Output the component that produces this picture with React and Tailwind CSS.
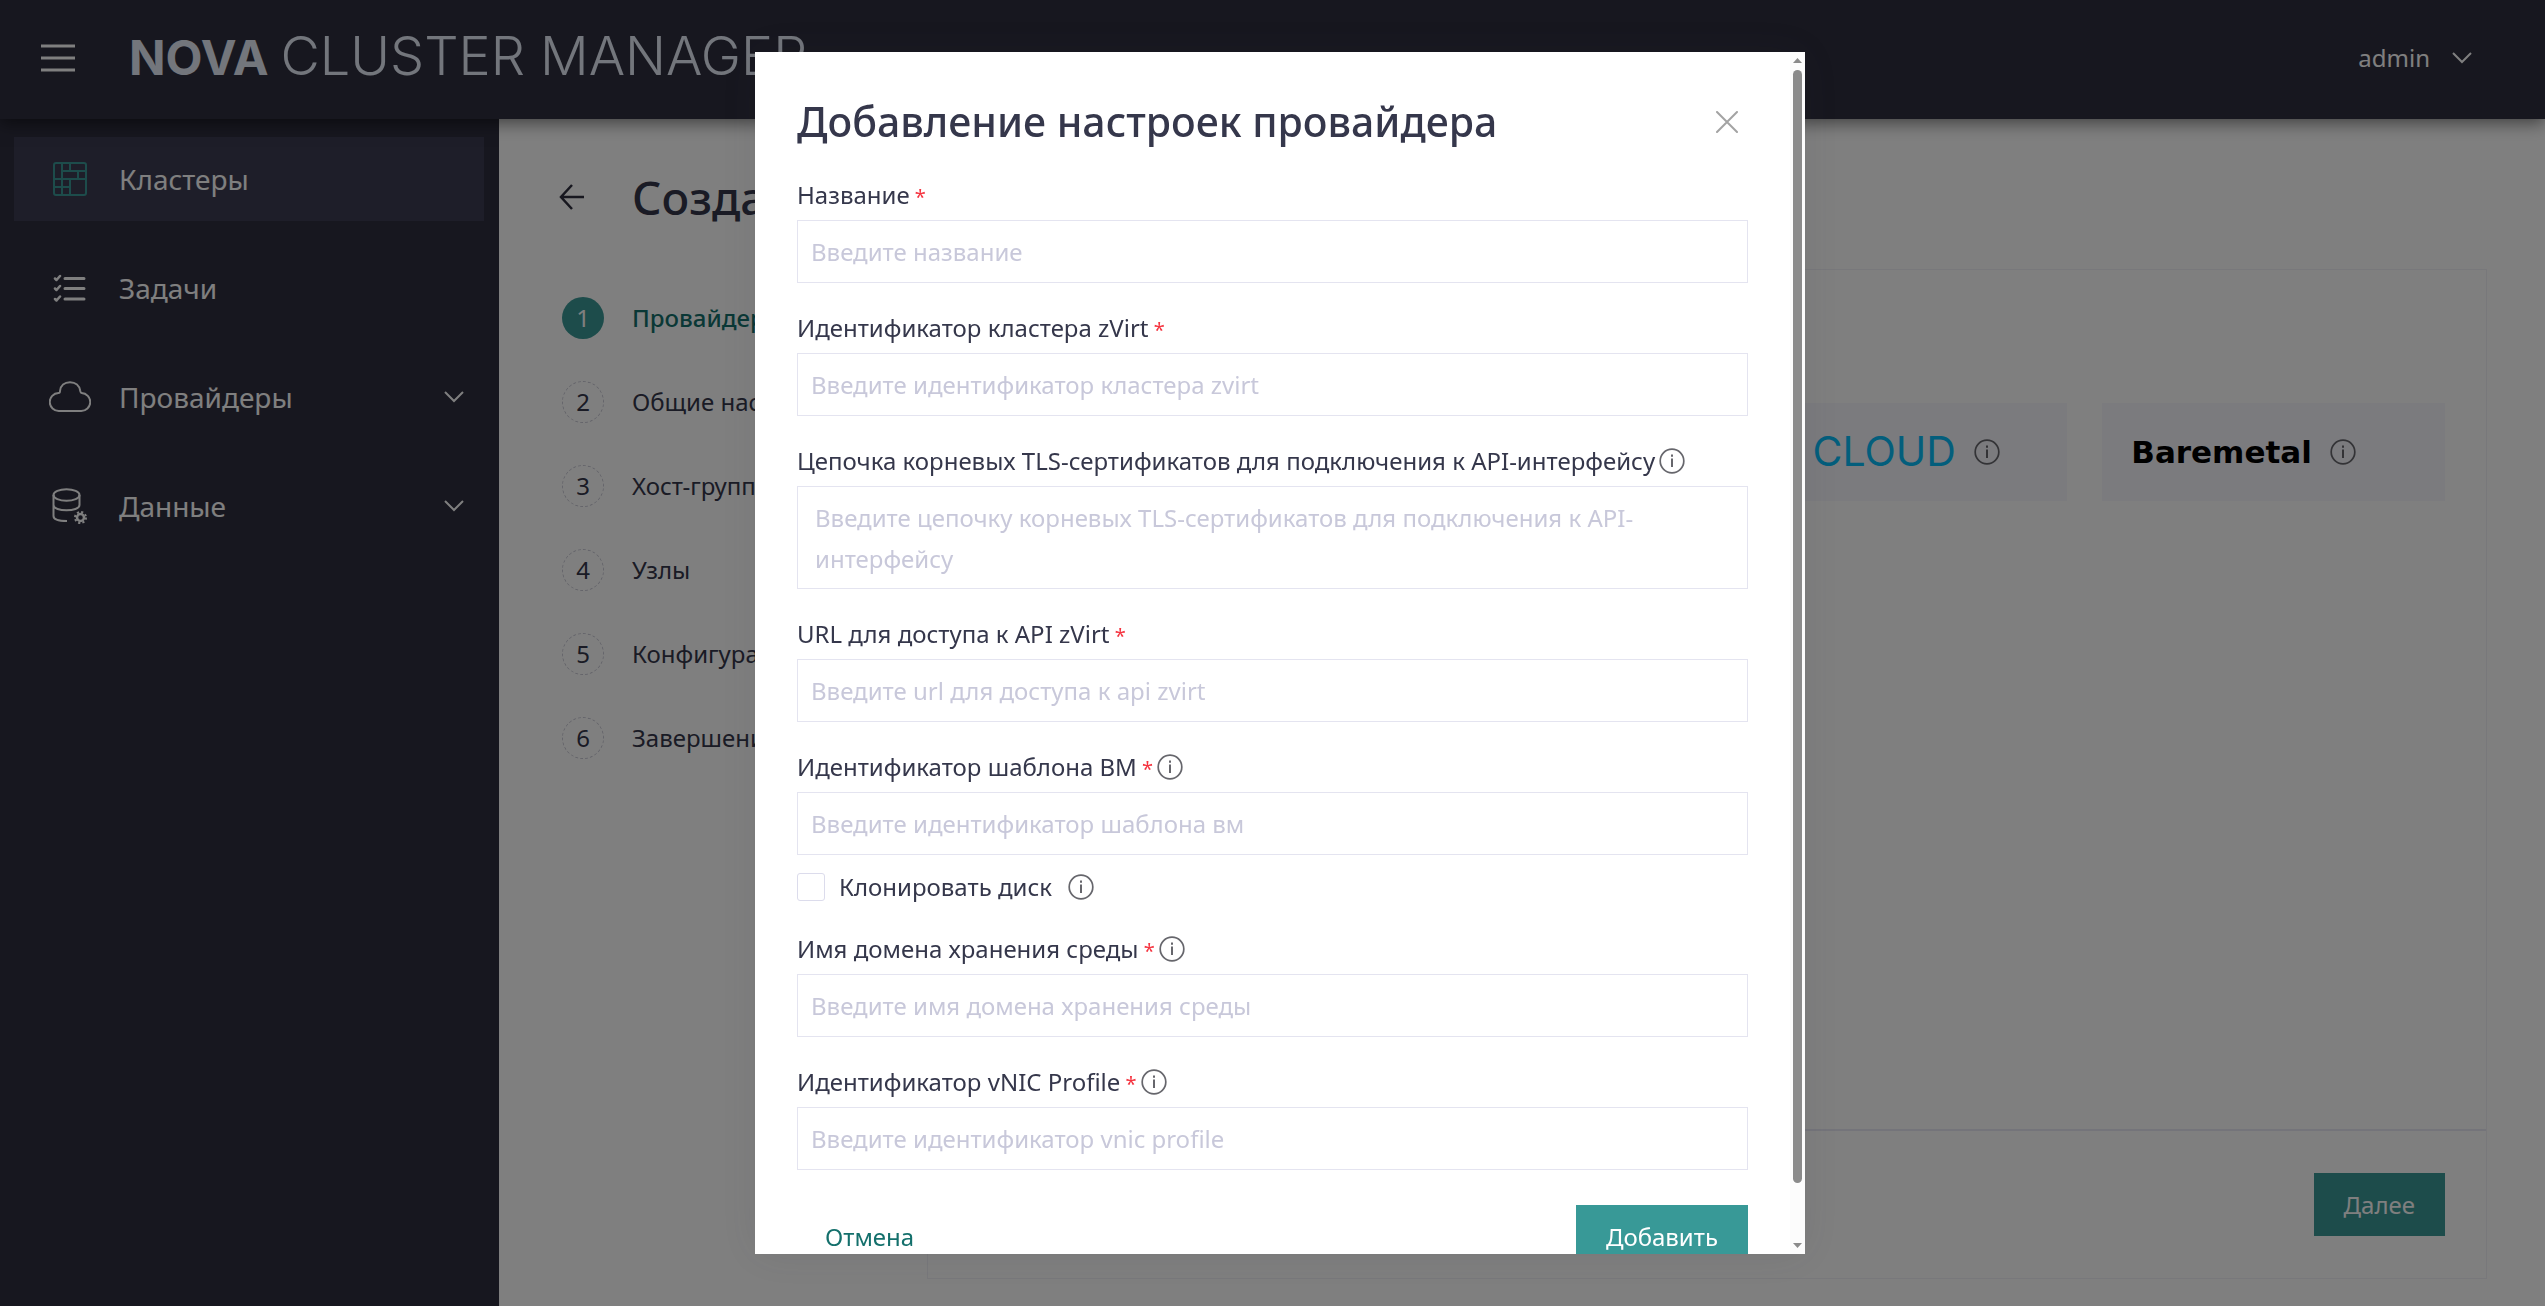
import React, { useState } from "react";

const menu = [
  { id: "clusters", title: "Кластеры", Icon: ClustersIcon, active: true },
  { id: "tasks", title: "Задачи", Icon: TasksIcon },
  { id: "providers", title: "Провайдеры", Icon: CloudIcon, nested: true },
  { id: "data", title: "Данные", Icon: DataIcon, nested: true },
];

const steps = [
  "Провайдер",
  "Общие настройки",
  "Хост-группы",
  "Узлы",
  "Конфигурация",
  "Завершение",
];

function ClustersIcon() {
  return (
    <svg width="34" height="34" viewBox="0 0 34 34" fill="none" stroke="#3a9896" strokeWidth="2">
      <rect x="1" y="1" width="32" height="32" rx="2" />
      <path d="M9 1v32M17 1v8M9 9h24M25 9v8M1 17h32M17 17v16M1 25h16" />
    </svg>
  );
}

function TasksIcon() {
  return (
    <svg width="34" height="28" viewBox="0 0 34 28" fill="none" stroke="currentColor" strokeWidth="3" strokeLinecap="round">
      <path d="M12 4.500h19M12 14.500h19M12 25h19" />
      <path strokeWidth="2.500" strokeLinejoin="round" d="M2 4.500l1.500 1.500L7 2M2 14.500l1.500 1.500L7 12M2 25l1.500 1.500L7 22.500" />
    </svg>
  );
}

function CloudIcon() {
  return (
    <svg width="42" height="32" viewBox="0 0 42 32" fill="none" stroke="currentColor" strokeWidth="2">
      <path d="M10 30H32A9 9 0 0 0 32.500 12C31.500 12 31.500 11 31.300 10C30.500 4.500 26.500 1.200 21 1.200S11.500 4.500 11 10C11 11.500 10.800 12 9.500 12A9 9 0 0 0 10 30Z" />
    </svg>
  );
}

function DataIcon() {
  return (
    <svg width="36" height="36" viewBox="0 0 36 36" fill="none" stroke="currentColor" strokeWidth="2">
      <ellipse cx="14.500" cy="7" rx="13" ry="5.800" />
      <path d="M1.500 7v21c0 3 5 5 13.500 5M27.500 7v10c0 7-26 7-26 0" />
      <circle cx="28.500" cy="29.500" r="3.500" strokeWidth="2.500" />
      <circle cx="28.500" cy="29.500" r="5.500" strokeWidth="2" strokeDasharray="2.160 2.160" />
    </svg>
  );
}

function Chevron() {
  return (
    <svg width="20" height="12" viewBox="0 0 20 12" fill="none" stroke="currentColor" strokeWidth="2">
      <path d="M1 1l9 9 9-9" />
    </svg>
  );
}

function Info() {
  return (
    <button type="button" aria-label="Подсказка" className="block shrink-0 text-[#66666c]">
      <svg width="26" height="26" viewBox="0 0 26 26" fill="none" stroke="currentColor">
        <circle cx="13" cy="13" r="11.800" strokeWidth="1.700" />
        <path strokeWidth="2" d="M13 10.500v8.500M13 6.500v2.200" />
      </svg>
    </button>
  );
}

function Header() {
  return (
    <header className="relative z-10 flex h-[119px] shrink-0 items-center bg-[#2e2e3e] pr-[73px] pb-1 pl-[41px] text-white shadow-[0_4px_16px_rgba(0,0,0,0.5)]">
      <button type="button" aria-label="Меню">
        <svg width="34" height="28" viewBox="0 0 34 28" stroke="currentColor" strokeWidth="3">
          <path d="M0 2h34M0 14h34M0 26h34" />
        </svg>
      </button>
      <a href="#" className="ml-[54px] flex items-baseline gap-3 font-['Inter',sans-serif] text-[#e6ecf8]">
        <span className="text-[48px] font-bold">NOVA</span>
        <span className="text-[54px] leading-[60px] font-light">CLUSTER MANAGER</span>
      </a>
      <button type="button" className="ml-auto flex items-center gap-[22px] text-[24px]">
        admin
        <Chevron />
      </button>
    </header>
  );
}

function Sidebar() {
  return (
    <nav className="flex w-[499px] shrink-0 flex-col gap-[25px] bg-[#2e2e3e] px-[14px] pt-[18px] text-white">
      {menu.map(({ id, title, Icon, active, nested }) => (
        <a
          key={id}
          href="#"
          className={`flex h-[84px] items-center pr-[21px] pl-[35px] text-[28px] ${active ? "mr-[1px] bg-[#3c3c52]" : ""}`}
        >
          <span className="flex w-[42px] justify-center">
            <Icon />
          </span>
          <span className="ml-7">{title}</span>
          {nested && (
            <span className="ml-auto">
              <Chevron />
            </span>
          )}
        </a>
      ))}
    </nav>
  );
}

function ProviderCard({ children }) {
  return (
    <div className="flex h-[98px] items-center gap-[18px] bg-[#f6f6fc] pl-[29px]">
      {children}
      <Info />
    </div>
  );
}

function Wizard() {
  return (
    <main className="flex grow flex-col bg-white pt-12 pr-[58px] pb-[27px] pl-[60px]">
      <div className="flex h-[60px] items-center gap-12">
        <button type="button" aria-label="Назад">
          <svg width="25" height="26" viewBox="0 0 25 26" fill="none" stroke="#2e2e3e" strokeWidth="2.500">
            <path d="M25 13H2M13 1L2 13l11 12" />
          </svg>
        </button>
        <h1 className="text-[46px] leading-[56px] font-medium">Создание кластера</h1>
      </div>

      <div className="mt-[42px] flex grow">
        <ol className="flex w-[368px] shrink-0 flex-col gap-[42px] pt-7 pl-[3px] text-[24px]">
          {steps.map((step, i) => (
            <li key={step} className="flex h-[42px] items-center gap-7 whitespace-nowrap">
              <span
                className={`flex size-[42px] items-center justify-center rounded-full ${
                  i === 0 ? "bg-[#3a9896] text-white" : "border border-dashed border-[#c8c8d4]"
                }`}
              >
                {i + 1}
              </span>
              <span className={i === 0 ? "font-medium text-[#14706c]" : ""}>{step}</span>
            </li>
          ))}
        </ol>

        <section className="flex grow flex-col border border-[#f1f1f6] bg-white">
          <div className="grid grow grid-cols-4 content-start gap-[35px] px-[41px] pt-[133px]">
            <ProviderCard>
              <CloudIcon />
            </ProviderCard>
            <ProviderCard>
              <CloudIcon />
            </ProviderCard>
            <ProviderCard>
              <span className="flex items-center gap-[17px] font-['Inter',sans-serif] text-[41px] text-[#06bcf8]">
                <CloudIcon />
                CLOUD
              </span>
            </ProviderCard>
            <ProviderCard>
              <span className="font-['DejaVu_Sans',sans-serif] text-[31px] font-bold text-black">Baremetal</span>
            </ProviderCard>
          </div>
          <div className="flex h-[149px] items-center justify-end border-t-2 border-[#e8e8f4] px-[41px]">
            <button type="button" className="h-[63px] bg-[#3a9896] px-[30px] text-[24px] text-white">
              Далее
            </button>
          </div>
        </section>
      </div>
    </main>
  );
}

function Field({ id, label, placeholder, required, info, multiline }) {
  return (
    <div>
      <div className="mb-[5px] flex h-10 items-center gap-1">
        <label htmlFor={id}>
          {label}
          {required && <span className="text-[20px] text-[#f5333f]"> *</span>}
        </label>
        {info && <Info />}
      </div>
      {multiline ? (
        <textarea
          id={id}
          placeholder={placeholder}
          className="block h-[103px] w-full resize-none border border-[#e4e4f0] px-[17px] py-[10px] leading-[41px] outline-none placeholder:text-[#c8c8da]"
        />
      ) : (
        <input
          id={id}
          type="text"
          placeholder={placeholder}
          className="block h-[63px] w-full border border-[#e4e4f0] px-[13px] outline-none placeholder:text-[#c8c8da]"
        />
      )}
    </div>
  );
}

function ProviderModal() {
  const [cloneDisk, setCloneDisk] = useState(false);

  return (
    <div className="fixed inset-0 z-20 flex justify-center bg-black/50 py-[52px] pl-[15px]">
      <div role="dialog" aria-labelledby="modal-title" className="flex w-[1050px] bg-white shadow-[0_0_40px_rgba(46,46,62,0.1)]">
        <form className="flex grow flex-col gap-[25px] overflow-hidden px-[42px] pt-[46px] text-[24px]">
          <div className="mb-1 flex h-12 items-center justify-between pr-[10px]">
            <h2 id="modal-title" className="text-[41px] font-medium">
              Добавление настроек провайдера
            </h2>
            <button type="button" aria-label="Закрыть">
              <svg width="22" height="22" viewBox="0 0 22 22" stroke="#a3a3a3" strokeWidth="2" strokeLinecap="round">
                <path d="M1 1l20 20M21 1L1 21" />
              </svg>
            </button>
          </div>

          <Field id="name" label="Название" placeholder="Введите название" required />
          <Field
            id="cluster-id"
            label="Идентификатор кластера zVirt"
            placeholder="Введите идентификатор кластера zvirt"
            required
          />
          <Field
            id="tls"
            label="Цепочка корневых TLS-сертификатов для подключения к API-интерфейсу"
            placeholder="Введите цепочку корневых TLS-сертификатов для подключения к API-интерфейсу"
            info
            multiline
          />
          <Field
            id="api-url"
            label="URL для доступа к API zVirt"
            placeholder="Введите url для доступа к api zvirt"
            required
          />
          <div>
            <Field
              id="template-id"
              label="Идентификатор шаблона ВМ"
              placeholder="Введите идентификатор шаблона вм"
              required
              info
            />
            <div className="mt-3 -mb-[3px] flex h-10 items-center">
              <input
                id="clone-disk"
                type="checkbox"
                checked={cloneDisk}
                onChange={(e) => setCloneDisk(e.target.checked)}
                className="size-7 appearance-none rounded-[3px] border border-[#dcdcec] checked:bg-[#3a9896]"
              />
              <label htmlFor="clone-disk" className="mr-4 ml-[14px]">
                Клонировать диск
              </label>
              <Info />
            </div>
          </div>
          <Field
            id="storage-domain"
            label="Имя домена хранения среды"
            placeholder="Введите имя домена хранения среды"
            required
            info
          />
          <Field
            id="vnic"
            label="Идентификатор vNIC Profile"
            placeholder="Введите идентификатор vnic profile"
            required
            info
          />

          <div className="mt-[10px] flex shrink-0 justify-between">
            <button type="button" className="h-[63px] px-7 text-[#14706c]">
              Отмена
            </button>
            <button type="submit" className="h-[63px] bg-[#389997] px-[30px] text-white">
              Добавить
            </button>
          </div>
        </form>

        {/* scrollbar */}
        <div className="flex w-[15px] shrink-0 flex-col items-center bg-[#fcfcfc] py-[6px]">
          <svg width="9" height="5" viewBox="0 0 9 5" fill="#8b8b8b">
            <path d="M0 5L4.500 0 9 5z" />
          </svg>
          <div className="mt-[7px] mb-[60px] w-[9px] grow rounded-full bg-[#8b8b8b]" />
          <svg width="9" height="5" viewBox="0 0 9 5" fill="#8b8b8b">
            <path d="M0 0L4.500 5 9 0z" />
          </svg>
        </div>
      </div>
    </div>
  );
}

export default function App() {
  return (
    <div className="flex h-screen flex-col overflow-hidden font-['Noto_Sans',sans-serif] text-[#35374b]">
      <Header />
      <div className="flex grow">
        <Sidebar />
        <Wizard />
      </div>
      <ProviderModal />
    </div>
  );
}
